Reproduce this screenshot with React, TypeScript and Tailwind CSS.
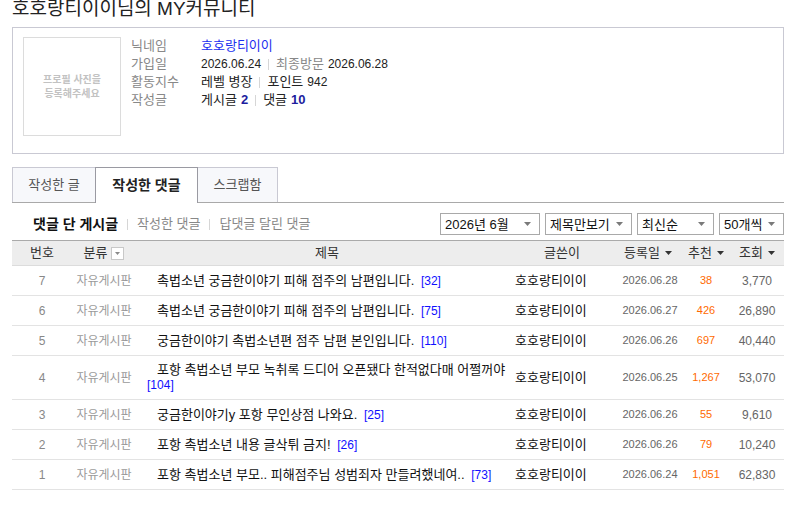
import React from "react"

type Row = {
  no: number
  title: string
  cmt: number
  date: string
  rec: string
  views: string
}

const ROWS: Row[] = [
  { no: 7, title: "촉법소년 궁금한이야기 피해 점주의 남편입니다.", cmt: 32, date: "2026.06.28", rec: "38", views: "3,770" },
  { no: 6, title: "촉법소년 궁금한이야기 피해 점주의 남편입니다.", cmt: 75, date: "2026.06.27", rec: "426", views: "26,890" },
  { no: 5, title: "궁금한이야기 촉법소년편 점주 남편 본인입니다.", cmt: 110, date: "2026.06.26", rec: "697", views: "40,440" },
  { no: 4, title: "포항 촉법소년 부모 녹취록 드디어 오픈됐다 한적없다매 어쩔꺼야", cmt: 104, date: "2026.06.25", rec: "1,267", views: "53,070" },
  { no: 3, title: "궁금한이야기y 포항 무인상점 나와요.", cmt: 25, date: "2026.06.26", rec: "55", views: "9,610" },
  { no: 2, title: "포항 촉법소년 내용 글삭튀 금지!", cmt: 26, date: "2026.06.26", rec: "79", views: "10,240" },
  { no: 1, title: "포항 촉법소년 부모.. 피해점주님 성범죄자 만들려했네여..", cmt: 73, date: "2026.06.24", rec: "1,051", views: "62,830" },
]

const COLS = "grid grid-cols-[60px_64px_374px_104px_68px_48px_54px]"

function Caret({ className = "" }: { className?: string }) {
  return (
    <svg width="7" height="4" viewBox="0 0 7 4" className={className} aria-hidden>
      <path d="M0 0h7L3.5 4z" fill="currentColor" />
    </svg>
  )
}

function Sep({ className = "" }: { className?: string }) {
  return <span className={`inline-block h-[11px] w-px bg-[#d6d6d6] ${className}`} />
}

function SelectBox({ label, width }: { label: string; width: string }) {
  return (
    <div className={`flex h-[22px] items-center justify-between border border-[#a9a9a9] bg-white pl-[4px] pr-[8px] ${width}`}>
      <span className="text-[13px] leading-none text-[#111]">{label}</span>
      <Caret className="text-[#7a7a7a]" />
    </div>
  )
}

function InfoRow({ label, children }: { label: string; children: React.ReactNode }) {
  return (
    <div className="flex h-[18px] items-center">
      <span className="w-[70px] text-[#888]">{label}</span>
      <div className="flex items-center text-[#222]">{children}</div>
    </div>
  )
}

export default function App() {
  return (
    <div className="h-[515px] w-[799px] overflow-hidden bg-white font-['Liberation_Sans','Noto_Sans_CJK_KR',sans-serif] text-[13px]">
      <div className="pl-[12px] pr-[15px]">
        <h1 className="-mt-[1px] h-[28px] text-[19px] leading-[19px] text-[#222]">호호랑티이이님의 MY커뮤니티</h1>

        {/* profile */}
        <div className="flex h-[127px] border border-[#c9c9d3] pl-[10px] pt-[9px]">
          <div className="flex h-[99px] w-[98px] items-center justify-center border border-[#dcdcdc] text-center text-[10px] font-bold leading-[14px] text-[#c2c2c2]">
            프로필 사진을
            <br />
            등록해주세요
          </div>
          <div className="ml-[10px]">
            <InfoRow label="닉네임">
              <span className="text-[#1a2ef0]">호호랑티이이</span>
            </InfoRow>
            <InfoRow label="가입일">
              <span className="text-[12px]">2026.06.24</span>
              <Sep className="mx-[7px]" />
              <span className="text-[#888]">최종방문</span>
              <span className="ml-[4px] text-[12px]">2026.06.28</span>
            </InfoRow>
            <InfoRow label="활동지수">
              <span>레벨 병장</span>
              <Sep className="mx-[7px]" />
              <span>포인트</span>
              <span className="ml-[4px] text-[12px]">942</span>
            </InfoRow>
            <InfoRow label="작성글">
              <span>게시글</span>
              <b className="ml-[4px] text-[#1d1d9e]">2</b>
              <Sep className="mx-[7px]" />
              <span>댓글</span>
              <b className="ml-[4px] text-[#1d1d9e]">10</b>
            </InfoRow>
          </div>
        </div>

        {/* tabs */}
        <div className="mt-[13px] flex h-[36px] items-end border-b border-[#a9a9a9]">
          <div className="flex h-[35px] w-[84px] items-center justify-center border border-b-0 border-[#c9c9d3] bg-[#f7f8fb] text-[13px] text-[#555]">
            작성한 글
          </div>
          <div className="relative z-10 -mb-px -ml-px flex h-[36px] w-[103px] items-center justify-center border border-b-0 border-[#9a9aa2] bg-white text-[14px] font-bold text-[#222]">
            작성한 댓글
          </div>
          <div className="-ml-px flex h-[35px] w-[81px] items-center justify-center border border-b-0 border-[#c9c9d3] bg-[#f7f8fb] text-[13px] text-[#555]">
            스크랩함
          </div>
        </div>

        {/* filters */}
        <div className="mt-[10px] flex h-[22px] items-center justify-between">
          <div className="flex items-center pl-[21px]">
            <span className="text-[14px] font-bold text-[#111]">댓글 단 게시글</span>
            <Sep className="mx-[9px]" />
            <span className="text-[#888]">작성한 댓글</span>
            <Sep className="mx-[9px]" />
            <span className="text-[#888]">답댓글 달린 댓글</span>
          </div>
          <div className="flex items-center gap-[5px]">
            <SelectBox label="2026년 6월" width="w-[100px]" />
            <SelectBox label="제목만보기" width="w-[87px]" />
            <SelectBox label="최신순" width="w-[77px]" />
            <SelectBox label="50개씩" width="w-[65px]" />
          </div>
        </div>

        {/* table */}
        <div className="mt-[5px]">
          <div className={`${COLS} h-[26px] border-b border-t border-[#dcdcdc] border-t-[#aaaaaa] bg-[#ededed] text-[#333]`}>
            <div className="flex items-center justify-center">번호</div>
            <div className="flex items-center justify-center">
              분류
              <span className="ml-[4px] flex h-[13px] w-[13px] items-center justify-center border border-[#c8c8c8] bg-white">
                <svg width="5" height="3" viewBox="0 0 5 3" aria-hidden>
                  <path d="M0 0h5L2.5 3z" fill="#8a8a8a" />
                </svg>
              </span>
            </div>
            <div className="flex items-center justify-center pl-[8px]">제목</div>
            <div className="flex items-center justify-center">글쓴이</div>
            <div className="flex items-center justify-center">
              등록일
              <Caret className="ml-[5px] text-[#333]" />
            </div>
            <div className="flex items-center justify-center">
              추천
              <Caret className="ml-[5px] text-[#333]" />
            </div>
            <div className="flex items-center justify-center">
              조회
              <Caret className="ml-[5px] text-[#333]" />
            </div>
          </div>

          {ROWS.map((r) => (
            <div key={r.no} className={`${COLS} min-h-[30px] border-b border-[#e3e3e3]`}>
              <div className="flex items-center justify-center text-[12px] text-[#888]">{r.no}</div>
              <div className="flex items-center justify-center text-[12px] text-[#9a9a9a]">자유게시판</div>
              <div className="flex items-center py-[6px] pl-[8px] text-[#111]">
                <div className="leading-[15px]">
                  <span className="inline-block w-[13px]" />
                  <span className="whitespace-nowrap">{r.title}</span>{" "}
                  <span className="ml-[3px] text-[12px] text-[#1010ff]">[{r.cmt}]</span>
                </div>
              </div>
              <div className="flex items-center pl-[5px] text-[#111]">호호랑티이이</div>
              <div className="flex items-center justify-center pl-[4px] text-[11px] text-[#666]">{r.date}</div>
              <div className="flex items-center justify-center text-[11px] text-[#ff6a00]">{r.rec}</div>
              <div className="flex items-center justify-center text-[12px] text-[#666]">{r.views}</div>
            </div>
          ))}
        </div>
      </div>
    </div>
  )
}
